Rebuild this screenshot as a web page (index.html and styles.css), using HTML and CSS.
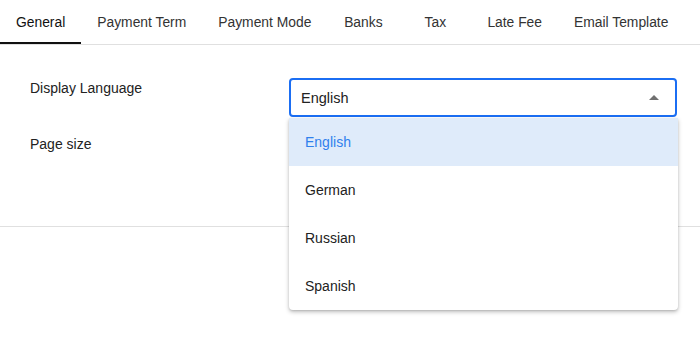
FILE: index.html
```html
<!DOCTYPE html>
<html lang="en">
  <head>
    <meta charset="UTF-8" />
    <meta name="viewport" content="width=device-width, initial-scale=1.0" />
    <title>Settings</title>
    <link rel="stylesheet" href="styles.css">
  </head>
  <body>
    <!-- Tabs -->
    <nav class="tabs">
      <a href="#" class="tab active">General</a>
      <a href="#" class="tab">Payment Term</a>
      <a href="#" class="tab">Payment Mode</a>
      <a href="#" class="tab">Banks</a>
      <a href="#" class="tab">Tax</a>
      <a href="#" class="tab">Late Fee</a>
      <a href="#" class="tab">Email Template</a>
    </nav>

    <!-- General settings -->
    <main class="settings">
      <div class="row">
        <label class="label">Display Language</label>
        <div class="select-wrap">
          <div class="select open">
            <span>English</span>
            <span class="arrow"></span>
          </div>
          <ul class="menu">
            <li class="selected">English</li>
            <li>German</li>
            <li>Russian</li>
            <li>Spanish</li>
          </ul>
        </div>
      </div>
      <div class="row">
        <label class="label">Page size</label>
        <div class="select-wrap"></div>
      </div>
    </main>
  </body>
</html>
```

FILE: styles.css
```css
* {
  box-sizing: border-box;
  margin: 0;
  padding: 0;
}

html,
body {
  min-height: 340px;
}

body {
  font-family: "Liberation Sans", Arial, sans-serif;
  font-size: 14px;
  color: #222;
  background: #fff;
}

/* Tabs */
.tabs {
  display: flex;
  border-bottom: 1px solid #e0e0e0;
}

.tab {
  min-width: 72px;
  height: 44px;
  padding: 0 16px;
  display: flex;
  align-items: center;
  justify-content: center;
  font-size: 13.85px;
  color: #333;
  text-decoration: none;
  white-space: nowrap;
}

.tab.active {
  color: #111;
  border-bottom: 2px solid #111;
  padding-top: 2px;
}

/* Settings form */
.settings {
  padding: 33px 23px 36px 30px;
  border-bottom: 1px solid #e0e0e0;
}

.row {
  display: grid;
  grid-template-columns: 259px 388px;
  height: 56px;
}

.label {
  line-height: 20px;
}

.select-wrap {
  position: relative;
}

.select {
  height: 39px;
  border: 2px solid #1b6ef3;
  border-radius: 4px;
  padding: 0 16px 0 10px;
  display: flex;
  align-items: center;
  justify-content: space-between;
  font-size: 14.5px;
  color: #222;
}

.arrow {
  width: 0;
  height: 0;
  border-left: 5px solid transparent;
  border-right: 5px solid transparent;
  border-bottom: 5px solid #707070;
}

/* Dropdown menu */
.menu {
  position: absolute;
  top: 40px;
  left: 0;
  width: 389px;
  list-style: none;
  background: #fff;
  border-radius: 0 0 4px 4px;
  box-shadow: 0 2px 4px rgba(0, 0, 0, 0.25), 0 1px 2px rgba(0, 0, 0, 0.1);
  z-index: 10;
}

.menu li {
  height: 48px;
  padding: 0 16px;
  display: flex;
  align-items: center;
  color: #222;
}

.menu li.selected {
  background: #dfebfa;
  color: #2f80ed;
}
```
